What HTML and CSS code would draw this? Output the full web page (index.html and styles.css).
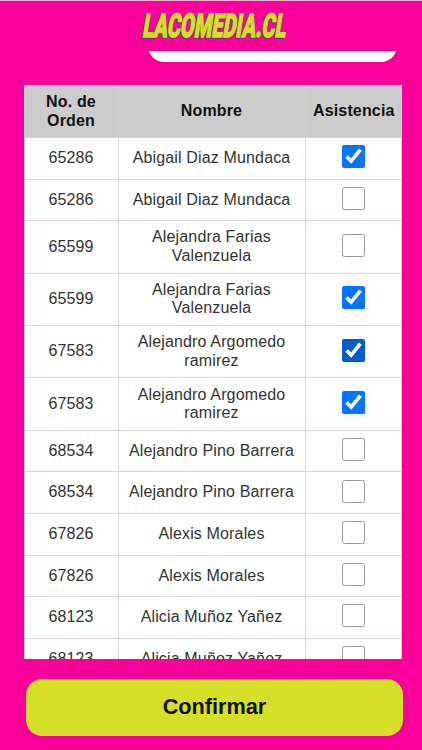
FILE: index.html
```html
<!DOCTYPE html>
<html lang="es">
  <head>
    <meta charset="UTF-8" />
    <meta name="viewport" content="width=device-width, initial-scale=1.0" />
    <title>LACOMEDIA.CL</title>
    <link rel="stylesheet" href="styles.css">
  </head>
  <body>
    <header class="header">
      <svg class="logo" viewBox="0 0 154 36" role="img" aria-label="LACOMEDIA.CL">
        <g transform="translate(6 29) skewX(-9)">
          <text class="logo-shadow" x="-1.5" y="1.2" textLength="143" lengthAdjust="spacingAndGlyphs">LACOMEDIA.CL</text>
          <text class="logo-text" x="0" y="0" textLength="143" lengthAdjust="spacingAndGlyphs">LACOMEDIA.CL</text>
        </g>
      </svg>
    </header>

    <main class="content">
      <div class="search"></div>
      <table class="orders">
        <colgroup>
          <col class="col-order">
          <col class="col-name">
          <col class="col-check">
        </colgroup>
        <thead>
          <tr><th>No. de Orden</th><th>Nombre</th><th>Asistencia</th></tr>
        </thead>
        <tbody>
          <tr><td>65286</td><td>Abigail Diaz Mundaca</td><td><input type="checkbox" checked></td></tr>
          <tr><td>65286</td><td>Abigail Diaz Mundaca</td><td><input type="checkbox"></td></tr>
          <tr class="tall"><td>65599</td><td>Alejandra Farias Valenzuela</td><td><input type="checkbox"></td></tr>
          <tr class="tall"><td>65599</td><td>Alejandra Farias Valenzuela</td><td><input type="checkbox" checked></td></tr>
          <tr class="tall"><td>67583</td><td>Alejandro Argomedo ramirez</td><td><input type="checkbox" class="active" checked></td></tr>
          <tr class="tall"><td>67583</td><td>Alejandro Argomedo ramirez</td><td><input type="checkbox" checked></td></tr>
          <tr><td>68534</td><td>Alejandro Pino Barrera</td><td><input type="checkbox"></td></tr>
          <tr><td>68534</td><td>Alejandro Pino Barrera</td><td><input type="checkbox"></td></tr>
          <tr><td>67826</td><td>Alexis Morales</td><td><input type="checkbox"></td></tr>
          <tr><td>67826</td><td>Alexis Morales</td><td><input type="checkbox"></td></tr>
          <tr><td>68123</td><td>Alicia Muñoz Yañez</td><td><input type="checkbox"></td></tr>
          <tr><td>68123</td><td>Alicia Muñoz Yañez</td><td><input type="checkbox"></td></tr>
        </tbody>
      </table>
    </main>

    <footer class="footer">
      <button type="submit" class="btn">Confirmar</button>
    </footer>
  </body>
</html>
```
FILE: styles.css
```css
:root {
  --pink: #f9009b;
  --lime: #d6df27;
  --line: #dccfd7;
}
* {
  box-sizing: border-box;
}
body {
  margin: 0;
  height: 100vh;
  display: flex;
  flex-direction: column;
  overflow: hidden;
  background: var(--pink);
  font-family: "Liberation Sans", Arial, sans-serif;
}
.header {
  height: 51px;
  flex: none;
  display: flex;
  justify-content: center;
  padding-top: 7px;
  border-top: 1px solid #f5b5dc;
}
.logo {
  width: 154px;
  height: 36px;
  margin-left: 4px;
}
.logo text {
  font-family: Roboto, "Liberation Sans", sans-serif;
  font-size: 33px;
  font-weight: 900;
}
.logo-text {
  fill: #d9dc2c;
  stroke: #d9dc2c;
  stroke-width: 1.3px;
}
.logo-shadow {
  fill: #67386f;
  stroke: #67386f;
  stroke-width: 1.3px;
}
.content {
  flex: 1;
  min-height: 0;
  overflow: hidden;
  padding: 0 21px 0 24px;
}
.search {
  height: 40px;
  width: 249px;
  margin: -29px 4px 23px auto;
  background: #fff;
  border-radius: 16px;
}
.orders {
  width: 377px;
  table-layout: fixed;
  border-collapse: collapse;
  background: #fff;
  color: #333;
  font-size: 16px;
  line-height: 18.5px;
  letter-spacing: 0.15px;
  text-align: center;
}
.col-order {
  width: 94px;
}
.col-name {
  width: 187px;
}
.col-check {
  width: 96px;
}
.orders th,
.orders td {
  border: 1px solid var(--line);
  padding: 0 8px 0 7px;
}
.orders th {
  height: 52px;
  background: #ccc;
  color: #111;
}
.orders td {
  height: 41.6px;
}
.orders .tall td {
  height: 52.4px;
}
.orders input {
  display: block;
  width: 23px;
  height: 23px;
  margin: -3px auto 0;
}
.orders input:not(:checked) {
  opacity: 0.75;
}
.orders .active {
  accent-color: #005cc8;
}
.footer {
  height: 91px;
  flex: none;
  padding: 20px 19px 0 26px;
}
.btn {
  display: block;
  width: 100%;
  height: 57px;
  padding: 0 0 2px;
  border: none;
  border-radius: 16px;
  background: var(--lime);
  color: #111;
  font-family: inherit;
  font-size: 21.7px;
  font-weight: bold;
  cursor: pointer;
}
```
